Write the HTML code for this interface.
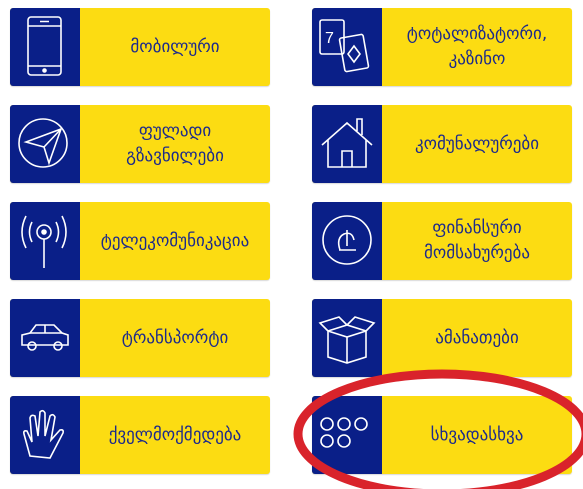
<!DOCTYPE html>
<html><head><meta charset="utf-8"><style>
body{margin:0;width:583px;height:489px;background:#fff;position:relative;overflow:hidden;font-family:"DejaVu Sans","Liberation Sans",sans-serif}
.t{position:absolute;width:260px;height:78px;background:#fcdc12;border-radius:3px;overflow:hidden;box-shadow:0 1px 1px rgba(0,0,0,.15)}
.t .i{position:absolute;left:0;top:0;width:70px;height:78px;background:#0a1f88}
.t .i svg{position:absolute;left:0;top:0}
.t .l{position:absolute;left:70px;right:0;top:0;bottom:0;display:flex;align-items:center;justify-content:center;text-align:center;color:#1c2a8c;font-size:17px;line-height:25px}
</style></head><body>

<div class="t" style="left:10px;top:8px"><div class="i"><svg width="70" height="78" fill="none" stroke="#fff" stroke-width="1.6"><rect x="18" y="9" width="33" height="58" rx="3"/><line x1="18" y1="18" x2="51" y2="18"/><line x1="18" y1="58" x2="51" y2="58"/><line x1="30" y1="13.5" x2="39" y2="13.5"/><circle cx="34.5" cy="62.5" r="1.5" fill="#fff"/></svg></div><div class="l">მობილური</div></div>

<div class="t" style="left:10px;top:105px"><div class="i"><svg width="70" height="78" fill="none" stroke="#fff" stroke-width="1.6"><circle cx="33" cy="38" r="24"/><path d="M16 37 L51 24 L39 58 L34 42 Z M34 42 L51 24"/></svg></div><div class="l">ფულადი<br>გზავნილები</div></div>

<div class="t" style="left:10px;top:202px"><div class="i"><svg width="70" height="78" fill="none" stroke="#fff" stroke-width="1.6"><circle cx="34" cy="30" r="7"/><circle cx="34" cy="30" r="2" fill="#fff"/><line x1="34" y1="37" x2="34" y2="66"/><path d="M22 20 Q17 30 22 40 M46 20 Q51 30 46 40 M16 14 Q8 30 16 46 M52 14 Q60 30 52 46"/></svg></div><div class="l">ტელეკომუნიკაცია</div></div>

<div class="t" style="left:10px;top:299px"><div class="i"><svg width="70" height="78" fill="none" stroke="#fff" stroke-width="1.6"><path d="M12 46 V36 L20 34 L26 26 H44 L52 34 L58 36 V46 Z"/><circle cx="22" cy="47" r="4"/><circle cx="48" cy="47" r="4"/><line x1="35" y1="26" x2="35" y2="34"/><line x1="20" y1="34" x2="52" y2="34"/></svg></div><div class="l">ტრანსპორტი</div></div>

<div class="t" style="left:10px;top:396px"><div class="i"><svg width="70" height="78" fill="none" stroke="#fff" stroke-width="1.6"><path d="M20 60 L14 38 Q13 34 17 35 L22 46 L20 22 Q21 18 25 20 L28 40 L30 16 Q33 13 35 17 L35 40 L40 20 Q43 17 45 21 L41 44 L50 34 Q54 33 53 37 L40 62 Z"/></svg></div><div class="l">ქველმოქმედება</div></div>

<div class="t" style="left:312px;top:8px"><div class="i"><svg width="70" height="78" fill="none" stroke="#fff" stroke-width="1.6"><rect x="8" y="12" width="24" height="34" rx="2"/><text x="13" y="35" fill="#fff" stroke="none" font-size="16" font-family="Liberation Sans">7</text><rect x="30" y="28" width="24" height="34" rx="2" transform="rotate(-10 42 45)"/><path d="M42 38 L48 46 L42 54 L36 46 Z"/></svg></div><div class="l">ტოტალიზატორი,<br>კაზინო</div></div>

<div class="t" style="left:312px;top:105px"><div class="i"><svg width="70" height="78" fill="none" stroke="#fff" stroke-width="1.6"><path d="M10 40 L35 18 L60 40 M16 35 V62 H54 V35 M30 62 V46 H40 V62 M45 26 V14 H50 V30"/></svg></div><div class="l">კომუნალურები</div></div>

<div class="t" style="left:312px;top:202px"><div class="i"><svg width="70" height="78" fill="none" stroke="#fff" stroke-width="1.6"><circle cx="35" cy="38" r="24"/><path d="M28 48 Q24 36 32 32 Q40 29 42 38 M35 28 V44 M27 48 H44"/></svg></div><div class="l">ფინანსური<br>მომსახურება</div></div>

<div class="t" style="left:312px;top:299px"><div class="i"><svg width="70" height="78" fill="none" stroke="#fff" stroke-width="1.6"><path d="M16 32 L35 26 L54 32 V58 L35 64 L16 58 Z M16 32 L35 38 L54 32 M35 38 V64 M16 32 L8 24 L27 18 L35 26 M54 32 L62 24 L43 18 L35 26"/></svg></div><div class="l">ამანათები</div></div>

<div class="t" style="left:312px;top:396px"><div class="i"><svg width="70" height="78" fill="none" stroke="#fff" stroke-width="1.6"><circle cx="15" cy="28" r="6"/><circle cx="32" cy="28" r="6"/><circle cx="49" cy="28" r="6"/><circle cx="15" cy="45" r="6"/><circle cx="32" cy="45" r="6"/></svg></div><div class="l">სხვადასხვა</div></div>

<svg style="position:absolute;left:0;top:0" width="583" height="489"><ellipse cx="442" cy="434" rx="144" ry="60" fill="none" stroke="#d9232b" stroke-width="9"/></svg>
</body></html>
